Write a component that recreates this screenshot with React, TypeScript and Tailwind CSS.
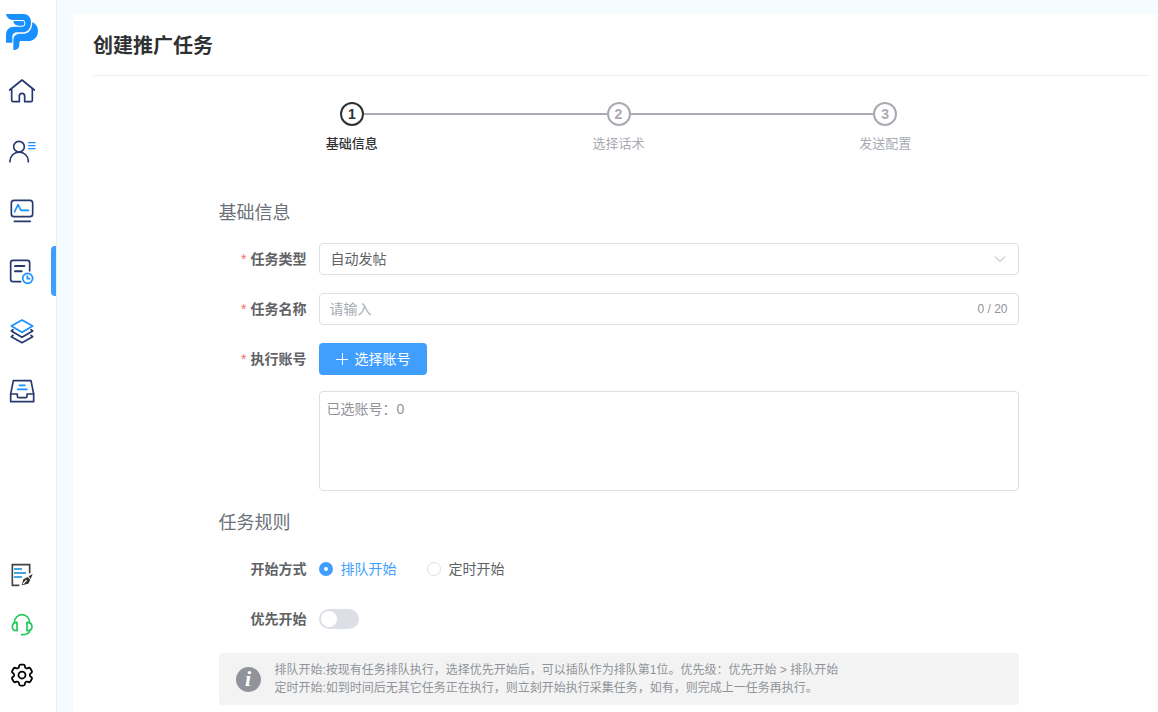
import { useState } from "react";
import type { ReactNode } from "react";
import { HiOutlineCog6Tooth } from "react-icons/hi2";

const NAVY = "#27386e";
const BLUE = "#1890ff";

function Glyph({ children, color = NAVY, width = 5 }: { children: ReactNode; color?: string; width?: number }) {
  return (
    <svg
      viewBox="0 0 84 84"
      className="size-7"
      fill="none"
      stroke={color}
      strokeWidth={width}
      strokeLinecap="round"
      strokeLinejoin="round"
      aria-hidden="true"
    >
      {children}
    </svg>
  );
}

function Logo() {
  return (
    <svg viewBox="0 0 96 108" className="h-9 w-8" fill={BLUE} role="img" aria-label="logo">
      <path d="M0 0H52C66 0 75 10 75 24C75 43 66 55 50 55H34C24 55 19 60 19 67V86H0V62C0 47 10 38 24 38H50C55 38 58 34 58 28S55 18 50 18H22C9 18 2 10 0 0Z" />
      <path d="M22 21H50C54 21 55 24 55 28S53 35 49 35H38C29 35 23 30 22 21Z" />
      <path d="M79 24C89 29 96 38 96 50C96 69 84 81 66 81H46C42 81 40 83 40 87V92C40 102 33 108 22 108V78C22 66 30 59 42 59H54C68 59 79 46 79 24Z" />
    </svg>
  );
}

const navItems = [
  {
    label: "首页",
    icon: (
      <Glyph>
        <path d="M5 39 42 9l37 30" />
        <path d="M11 36v34q0 4 4 4h19V57a8 8 0 0 1 16 0v17h19q4 0 4-4V36" />
      </Glyph>
    ),
  },
  {
    label: "账号",
    icon: (
      <Glyph>
        <circle cx="33" cy="29" r="16" />
        <path d="M6 74v-2a27 26 0 0 1 55 0v2" />
        <path d="M62 17h19M62 26h19M62 35h19" stroke={BLUE} strokeWidth="4" />
      </Glyph>
    ),
  },
  {
    label: "监控",
    icon: (
      <Glyph>
        <rect x="10" y="10" width="64" height="49" rx="8" />
        <path d="m20 44 10-21 9 17h23" stroke={BLUE} />
        <path d="M19 73h48" />
      </Glyph>
    ),
  },
  {
    label: "任务",
    active: true,
    icon: (
      <Glyph>
        <path d="M38 74H15a7 7 0 0 1-7-7V17a7 7 0 0 1 7-7h43a7 7 0 0 1 7 7v25" />
        <path d="M21 27h28M21 43h20" strokeWidth="6" />
        <circle cx="59" cy="64" r="15" stroke={BLUE} />
        <path d="M58 57v8h7" stroke={BLUE} />
      </Glyph>
    ),
  },
  {
    label: "素材",
    icon: (
      <Glyph>
        <path d="m15 38-5 4 32 19 32-19-5-4" />
        <path d="m15 55-5 4 32 18 32-18-5-4" />
        <path d="m42 9 32 18-32 19-32-19z" stroke={BLUE} />
      </Glyph>
    ),
  },
  {
    label: "收件箱",
    icon: (
      <Glyph>
        <path d="M16 11h53l8 40v23H8V51z" />
        <path d="M8 51h20v7q0 4 4 4h21q4 0 4-4v-7h20" />
        <path d="M34 25h17M29 37h28" stroke={BLUE} />
      </Glyph>
    ),
  },
];

const toolItems = [
  {
    label: "反馈",
    icon: (
      <Glyph color="#444">
        <path d="M34 73H13V11h52v26" strokeLinecap="butt" strokeLinejoin="miter" />
        <path d="M18 24h24M18 36h36M18 48h24" stroke="#45a8dc" strokeWidth="6" strokeLinecap="butt" />
        <path d="m41 73 5-18 13-7 8 8-6 12zM62 46l12-7-6 15z" fill="#333" stroke="none" />
        <path d="m46 68 9-10" stroke="#fff" strokeWidth="4" />
      </Glyph>
    ),
  },
  {
    label: "客服",
    icon: (
      <Glyph color="#1fc95b">
        <path d="M19 35a23 24 0 0 1 46 0" />
        <path d="M27 34v25c-9 0-14-4-14-12s5-13 14-13zM57 34v25c9 0 15-4 15-12s-6-13-15-13z" />
        <path d="M66 58c-2 9-9 13-25 13" />
      </Glyph>
    ),
  },
  { label: "设置", icon: <HiOutlineCog6Tooth className="size-7 text-black" aria-hidden="true" /> },
];

const steps = ["基础信息", "选择话术", "发送配置"];

function NavButton({ label, icon, active }: { label: string; icon: ReactNode; active?: boolean }) {
  return (
    <button type="button" aria-label={label} className="flex h-[50px] w-full items-center justify-between">
      <span className="flex w-11 justify-center">{icon}</span>
      {active && <span className="h-full w-[5px] rounded-l bg-[#409eff]" />}
    </button>
  );
}

function Sidebar() {
  return (
    <aside className="sticky top-0 flex h-screen w-[57px] shrink-0 flex-col border-r border-[#e8ecef] bg-white pt-3.5 pb-3">
      <div className="flex w-11 justify-center">
        <Logo />
      </div>
      <nav className="mt-4 flex flex-col gap-2.5">
        {navItems.map((item) => (
          <NavButton key={item.label} {...item} />
        ))}
      </nav>
      <div className="mt-auto flex flex-col">
        {toolItems.map((item) => (
          <NavButton key={item.label} {...item} />
        ))}
      </div>
    </aside>
  );
}

function Steps() {
  return (
    <ol className="flex">
      {steps.map((step, index) => (
        <li
          key={step}
          className={`flex flex-1 flex-col items-center ${index === 0 ? "text-[#303133]" : "text-[#a8abb2]"}`}
        >
          <div className="flex w-full items-center">
            <span className={`h-0.5 flex-1 ${index === 0 ? "" : "bg-[#a8abb2]"}`} />
            <span className="flex size-6 items-center justify-center rounded-full border-2 border-current font-['Liberation_Sans',sans-serif] text-sm font-bold">
              {index + 1}
            </span>
            <span className={`h-0.5 flex-1 ${index === steps.length - 1 ? "" : "bg-[#a8abb2]"}`} />
          </div>
          <span className={`mt-2 text-[13px] leading-5 ${index === 0 ? "font-medium" : ""}`}>{step}</span>
        </li>
      ))}
    </ol>
  );
}

function FormRow({ label, htmlFor, required, children }: { label: string; htmlFor: string; required?: boolean; children: ReactNode }) {
  return (
    <div className="flex">
      <label htmlFor={htmlFor} className="w-[100px] shrink-0 pr-3 text-right text-sm leading-8 font-bold text-[#606266]">
        {required && <span className="mr-1 font-normal text-[#f56c6c]">*</span>}
        {label}
      </label>
      <div className="min-w-0 flex-1">{children}</div>
    </div>
  );
}

export default function App() {
  const [taskType, setTaskType] = useState("post");
  const [name, setName] = useState("");
  const [startMode, setStartMode] = useState("queue");
  const [priority, setPriority] = useState(false);

  const startModes = [
    { value: "queue", label: "排队开始" },
    { value: "timed", label: "定时开始" },
  ];

  return (
    <div className="flex min-h-screen bg-[#f5fcff] font-['Liberation_Sans','Noto_Sans_CJK_SC',sans-serif]">
      <Sidebar />
      <main className="flex min-w-0 flex-1 pt-3.5 pl-4">
        <div className="flex-1 rounded-tl bg-white pr-2.5 pl-5">
          <header className="border-b border-[#ebeef0] pt-[18px] pb-3.5">
            <h1 className="text-xl leading-[29px] font-bold text-[#303133]">创建推广任务</h1>
          </header>

          <div className="pr-1">
            <form className="mx-auto max-w-[800px] pt-[26px]" onSubmit={(e) => e.preventDefault()}>
              <Steps />

              <h2 className="mt-[46px] mb-[17px] text-lg leading-[26px] text-[#6b7178]">基础信息</h2>
              <div className="flex flex-col gap-[18px]">
                <FormRow label="任务类型" htmlFor="task-type" required>
                  <div className="relative">
                    <select
                      id="task-type"
                      value={taskType}
                      onChange={(e) => setTaskType(e.target.value)}
                      className="h-8 w-full appearance-none rounded border border-[#dcdfe6] bg-white px-[11px] text-sm text-[#606266]"
                    >
                      <option value="post">自动发帖</option>
                    </select>
                    <svg
                      viewBox="0 0 14 14"
                      className="pointer-events-none absolute top-[9px] right-3 size-3.5"
                      fill="none"
                      stroke="#a8abb2"
                      aria-hidden="true"
                    >
                      <path d="m2 4.5 5 5 5-5" />
                    </svg>
                  </div>
                </FormRow>

                <FormRow label="任务名称" htmlFor="task-name" required>
                  <div className="flex h-8 items-center rounded border border-[#dcdfe6] px-2.5">
                    <input
                      id="task-name"
                      type="text"
                      value={name}
                      maxLength={20}
                      onChange={(e) => setName(e.target.value)}
                      placeholder="请输入"
                      className="min-w-0 flex-1 text-sm text-[#606266] outline-none placeholder:text-[#a8abb2]"
                    />
                    <span className="text-xs text-[#909399]">{name.length} / 20</span>
                  </div>
                </FormRow>

                <FormRow label="执行账号" htmlFor="pick-account" required>
                  <button
                    id="pick-account"
                    type="button"
                    className="flex h-8 items-center gap-1.5 rounded bg-[#409eff] px-4 text-sm text-white"
                  >
                    <svg viewBox="0 0 14 14" className="size-3.5" stroke="#fff" aria-hidden="true">
                      <path d="M1 7.5h12M7.5 1v12" />
                    </svg>
                    选择账号
                  </button>
                  <textarea
                    readOnly
                    aria-label="已选账号"
                    placeholder="已选账号：0"
                    className="mt-4 block h-[100px] w-full resize-none rounded border border-[#dcdfe6] px-[7px] py-1.5 text-sm leading-[22px] placeholder:text-[#909399]"
                  />
                </FormRow>
              </div>

              <h2 className="mt-[19px] mb-[17px] text-lg leading-[26px] text-[#6b7178]">任务规则</h2>
              <div className="flex flex-col gap-[18px]">
                <FormRow label="开始方式" htmlFor="mode-queue">
                  <div className="flex h-8 items-center gap-[30px]">
                    {startModes.map((mode) => (
                      <label
                        key={mode.value}
                        className={`flex items-center gap-2 text-sm ${
                          startMode === mode.value ? "text-[#409eff]" : "text-[#606266]"
                        }`}
                      >
                        <input
                          id={`mode-${mode.value}`}
                          type="radio"
                          name="start-mode"
                          checked={startMode === mode.value}
                          onChange={() => setStartMode(mode.value)}
                          className="size-3.5 appearance-none rounded-full border border-[#dcdfe6] bg-white checked:border-5 checked:border-[#409eff]"
                        />
                        {mode.label}
                      </label>
                    ))}
                  </div>
                </FormRow>

                <FormRow label="优先开始" htmlFor="priority">
                  <div className="flex h-8 items-center">
                    <input
                      id="priority"
                      type="checkbox"
                      role="switch"
                      checked={priority}
                      onChange={(e) => setPriority(e.target.checked)}
                      className="flex h-5 w-10 appearance-none items-center rounded-full bg-[#dcdfe6] px-0.5 before:size-4 before:rounded-full before:bg-white checked:justify-end checked:bg-[#409eff]"
                    />
                  </div>
                </FormRow>
              </div>

              <div className="mt-[18px] flex items-center rounded bg-[#f3f3f3] py-2 pr-4 pl-[17px] text-[#909399]">
                <span
                  aria-hidden="true"
                  className="flex size-[25px] shrink-0 items-center justify-center rounded-full bg-[#909399] font-['Liberation_Serif',serif] text-[22px] leading-none font-bold text-white italic"
                >
                  i
                </span>
                <p className="ml-3.5 text-xs leading-[18px]">
                  排队开始:按现有任务排队执行，选择优先开始后，可以插队作为排队第1位。优先级：优先开始 &gt; 排队开始
                  <br />
                  定时开始:如到时间后无其它任务正在执行，则立刻开始执行采集任务，如有，则完成上一任务再执行。
                </p>
              </div>
            </form>
          </div>
        </div>
      </main>
    </div>
  );
}
